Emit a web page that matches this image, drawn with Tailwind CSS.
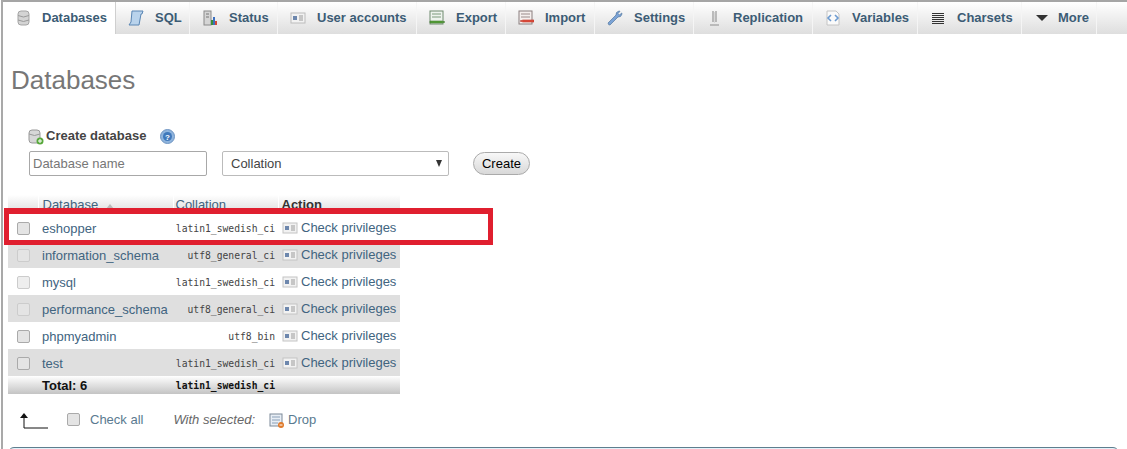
<!DOCTYPE html>
<html><head><meta charset="utf-8"><title>Databases</title>
<script src="https://cdn.jsdelivr.net/npm/@tailwindcss/browser@4"></script></head>
<body class="bg-white">
<div class="relative h-[449px] w-[1127px] overflow-hidden bg-white font-['Liberation_Sans',sans-serif] text-[13px]">
<div class="ml-px h-full border-l-2 border-[#a9a9a9]">
  <!-- tabs -->
  <nav class="flex h-[34px] border-t-2 border-[#a5a5a5] bg-gradient-to-b from-white to-[#dedede] text-[13px] font-bold text-[#3c5c75]">
    <a class="flex h-[32px] w-[113px] items-center gap-[11px] border-r border-[#cfcfcf] bg-white pl-3"><svg class="w-4 h-4" viewBox="0 0 16 16"><rect x="3" y="1" width="11" height="14" rx="3" fill="#d4d4d4" stroke="#a5a5a5"/><path d="M3 5.500q5.500 3 11 0M3 10q5.500 3 11 0" fill="none" stroke="#9a9a9a"/></svg><span>Databases</span></a>
    <a class="flex h-[32px] w-[74px] items-center gap-[11px] border-r border-[#f5f5f5] pl-3"><svg class="w-4 h-4" viewBox="0 0 16 16"><path d="M4 1h11l-1 3h-1l-2 11H1l2-3z" fill="#b9d3ec" stroke="#5a86b4"/></svg><span>SQL</span></a>
    <a class="flex h-[32px] w-[88px] items-center gap-[11px] border-r border-[#f5f5f5] pl-3"><svg class="w-4 h-4" viewBox="0 0 16 16"><rect x="2" y="1" width="7" height="14" fill="#d5d5d5" stroke="#8a8a8a"/><path d="M4 4h3M4 7h3" stroke="#777"/><rect x="9" y="10" width="2" height="5" fill="#3a8f3a"/><rect x="11" y="7" width="2" height="8" fill="#3a6fc0"/><rect x="13" y="11" width="2" height="4" fill="#d04a3a"/></svg><span>Status</span></a>
    <a class="flex h-[32px] w-[139px] items-center gap-[11px] border-r border-[#f5f5f5] pl-3"><svg class="w-4 h-4" viewBox="0 0 16 16"><rect x="1" y="3" width="14" height="10" fill="#f2f2f2" stroke="#bcbcbc"/><rect x="3" y="6" width="4" height="4" fill="#6d87ad"/><path d="M9 6h4M9 8h4M9 10h4" stroke="#9a9a9a"/></svg><span>User accounts</span></a>
    <a class="flex h-[32px] w-[89px] items-center gap-[11px] border-r border-[#f5f5f5] pl-3"><svg class="w-4 h-4" viewBox="0 0 16 16"><rect x="1" y="1" width="13" height="13" fill="#eef3ee" stroke="#6f8a6f"/><path d="M3 4h9M3 7h9" stroke="#7d9a7d"/><path d="M1 11h12l3 1-3 1H1z" fill="#57a33a" stroke="#3c7a28" stroke-width=".6"/></svg><span>Export</span></a>
    <a class="flex h-[32px] w-[89px] items-center gap-[11px] border-r border-[#f5f5f5] pl-3"><svg class="w-4 h-4" viewBox="0 0 16 16"><rect x="1" y="1" width="13" height="13" fill="#f5efee" stroke="#8a7f7f"/><path d="M3 4h9M3 7h9" stroke="#9a8a8a"/><path d="M16 10H5L2 11l3 1h11z" fill="#e2503f" stroke="#b83325" stroke-width=".6"/></svg><span>Import</span></a>
    <a class="flex h-[32px] w-[99px] items-center gap-[11px] border-r border-[#f5f5f5] pl-3"><svg class="w-4 h-4" viewBox="0 0 16 16"><path d="M1 13 9 5q-.5-3 3-4l1 .3-2 2.200 1.500 1.500 2.200-2 .3 1q-1 3.500-4 3L3 15q-1.500.5-2-2z" fill="#7ba3d6" stroke="#55789f" stroke-width=".7"/></svg><span>Settings</span></a>
    <a class="flex h-[32px] w-[119px] items-center gap-[11px] border-r border-[#f5f5f5] pl-3"><svg class="w-4 h-4" viewBox="0 0 16 16"><path d="M7 1v11M10 1v11M4 15h9" stroke="#8e8e8e" stroke-width="1.100" fill="none"/><path d="M8.500 2v11" stroke="#d8d8d8"/></svg><span>Replication</span></a>
    <a class="flex h-[32px] w-[105px] items-center gap-[11px] border-r border-[#f5f5f5] pl-3"><svg class="w-4 h-4" viewBox="0 0 16 16"><path d="M2 1h9l3 3v11H2z" fill="#fafafa" stroke="#c4c4c4"/><path d="M6 5 3 8l3 3M10 5l3 3-3 3" fill="none" stroke="#6d9bd0" stroke-width="1.600"/></svg><span>Variables</span></a>
    <a class="flex h-[32px] w-[104px] items-center gap-[11px] border-r border-[#f5f5f5] pl-3"><svg class="w-4 h-4" viewBox="0 0 16 16"><path d="M2 3.500h12M2 5.500h12M2 7.500h12M2 9.500h12M2 11.500h12M2 13.500h12" stroke="#333"/></svg><span>Charsets</span></a>
    <a class="flex h-[32px] w-[75px] items-center gap-2 border-r border-[#f5f5f5] pl-3"><svg class="w-4 h-4" viewBox="0 0 16 16"><path d="M2 5h12L8 11z" fill="#333"/></svg><span>More</span></a>
  </nav>

  <main class="pl-[5px]">
    <h2 class="mt-[31px] ml-[3px] text-[26px] leading-[30px] text-[#777]">Databases</h2>

    <section class="mt-[30px] ml-[20px]">
      <div class="flex h-[20px] items-center text-[13px] font-bold text-[#444]">
        <svg class="mr-[2px] mt-1 h-4 w-4" viewBox="0 0 16 16"><rect x="1" y="1" width="11" height="13" rx="3" fill="#d7d7d7" stroke="#999"/><path d="M1 5q5.500 3 11 0" fill="none" stroke="#999"/><circle cx="12" cy="12" r="3.500" fill="#58a83c"/><path d="M10 12h4M12 10v4" stroke="#fff"/></svg>
        <span class="pt-[2px]">Create database</span>
        <svg class="ml-[14px] mt-[3px] h-[15px] w-[15px]" viewBox="0 0 15 15"><circle cx="7.500" cy="7.500" r="7" fill="#8fb4dd" stroke="#6f95c2"/><circle cx="7.500" cy="7.500" r="4.500" fill="#3f78bb"/><text x="7.500" y="10.500" text-anchor="middle" font-size="8" font-weight="700" fill="#fff" font-family="Liberation Sans">?</text></svg>
      </div>
      <div class="mt-[6px] flex items-center">
        <input class="ml-px h-[25px] w-[178px] rounded-[2px] border border-[#a8a8a8] pl-[3px] text-[13px] outline-none placeholder:text-[#777]" placeholder="Database name">
        <div class="ml-[15px] flex h-[25px] w-[227px] items-center justify-between rounded-[2px] border border-[#bbb] pr-[6px] pl-2 text-[13px] text-[#444]"><span>Collation</span><span class="h-0 w-0 border-x-[3.500px] border-t-[7px] border-x-transparent border-t-[#333]"></span></div>
        <button class="ml-[24px] h-[23px] w-[57px] rounded-full border border-[#aaa] bg-gradient-to-b from-[#f8f8f8] to-[#d8d8d8] text-[13px] text-black">Create</button>
      </div>
    </section>

    <table class="mt-[19px] w-[392px] table-fixed border-collapse text-[13px] leading-[16px] text-[#41647f] [&_td]:pt-[2px]">
      <colgroup><col class="w-[30px]"><col class="w-[135px]"><col class="w-[105px]"><col></colgroup>
      <thead class="bg-gradient-to-b from-white to-[#dcdcdc]">
        <tr class="h-[19px] text-left align-top">
          <th class="border-r border-white"></th>
          <th class="border-r border-white pl-[4px] pt-[2px] font-normal"><span>Database</span><span class="ml-[8px] inline-block h-0 w-0 border-x-[4px] border-b-[5px] border-x-transparent border-b-[#bbb]"></span></th>
          <th class="border-r border-white pl-[2px] pt-[2px] font-normal">Collation</th>
          <th class="pl-[3px] pt-[2px] font-bold text-[#333]">Action</th>
        </tr>
      </thead>
      <tbody>
        <tr class="h-[27px] bg-white"><td class="pl-[9px]"><span class="block h-[13px] w-[13px] rounded-[2px] border border-[#aaa] bg-[#e4e4e4]"></span></td><td class="pl-1">eshopper</td><td class="pr-[3px] text-right font-['DejaVu_Sans_Mono',monospace] text-[9.7px] text-[#444]">latin1_swedish_ci</td><td class="pl-[4px]"><div class="flex items-center gap-[3px] pb-[2px]"><svg class="h-4 w-4" viewBox="0 0 16 16"><rect x="1" y="3" width="14" height="10" fill="#f2f2f2" stroke="#c4c4c4"/><rect x="3" y="6" width="4" height="4" fill="#6d87ad"/><path d="M9 6h4M9 8h4M9 10h4" stroke="#9a9a9a"/></svg><span>Check privileges</span></div></td></tr>
        <tr class="h-[27px] bg-[#dfdfdf]"><td class="pl-[9px]"><span class="block h-[13px] w-[13px] rounded-[2px] border border-[#ccc] bg-[#e4e4e4]"></span></td><td class="pl-1">information_schema</td><td class="pr-[3px] text-right font-['DejaVu_Sans_Mono',monospace] text-[9.7px] text-[#444]">utf8_general_ci</td><td class="pl-[4px]"><div class="flex items-center gap-[3px] pb-[2px]"><svg class="h-4 w-4" viewBox="0 0 16 16"><rect x="1" y="3" width="14" height="10" fill="#f2f2f2" stroke="#c4c4c4"/><rect x="3" y="6" width="4" height="4" fill="#6d87ad"/><path d="M9 6h4M9 8h4M9 10h4" stroke="#9a9a9a"/></svg><span>Check privileges</span></div></td></tr>
        <tr class="h-[27px] bg-white"><td class="pl-[9px]"><span class="block h-[13px] w-[13px] rounded-[2px] border border-[#ccc] bg-[#eee]"></span></td><td class="pl-1">mysql</td><td class="pr-[3px] text-right font-['DejaVu_Sans_Mono',monospace] text-[9.7px] text-[#444]">latin1_swedish_ci</td><td class="pl-[4px]"><div class="flex items-center gap-[3px] pb-[2px]"><svg class="h-4 w-4" viewBox="0 0 16 16"><rect x="1" y="3" width="14" height="10" fill="#f2f2f2" stroke="#c4c4c4"/><rect x="3" y="6" width="4" height="4" fill="#6d87ad"/><path d="M9 6h4M9 8h4M9 10h4" stroke="#9a9a9a"/></svg><span>Check privileges</span></div></td></tr>
        <tr class="h-[27px] bg-[#dfdfdf]"><td class="pl-[9px]"><span class="block h-[13px] w-[13px] rounded-[2px] border border-[#ccc] bg-[#e4e4e4]"></span></td><td class="pl-1">performance_schema</td><td class="pr-[3px] text-right font-['DejaVu_Sans_Mono',monospace] text-[9.7px] text-[#444]">utf8_general_ci</td><td class="pl-[4px]"><div class="flex items-center gap-[3px] pb-[2px]"><svg class="h-4 w-4" viewBox="0 0 16 16"><rect x="1" y="3" width="14" height="10" fill="#f2f2f2" stroke="#c4c4c4"/><rect x="3" y="6" width="4" height="4" fill="#6d87ad"/><path d="M9 6h4M9 8h4M9 10h4" stroke="#9a9a9a"/></svg><span>Check privileges</span></div></td></tr>
        <tr class="h-[27px] bg-white"><td class="pl-[9px]"><span class="block h-[13px] w-[13px] rounded-[2px] border border-[#aaa] bg-[#e4e4e4]"></span></td><td class="pl-1">phpmyadmin</td><td class="pr-[3px] text-right font-['DejaVu_Sans_Mono',monospace] text-[9.7px] text-[#444]">utf8_bin</td><td class="pl-[4px]"><div class="flex items-center gap-[3px] pb-[2px]"><svg class="h-4 w-4" viewBox="0 0 16 16"><rect x="1" y="3" width="14" height="10" fill="#f2f2f2" stroke="#c4c4c4"/><rect x="3" y="6" width="4" height="4" fill="#6d87ad"/><path d="M9 6h4M9 8h4M9 10h4" stroke="#9a9a9a"/></svg><span>Check privileges</span></div></td></tr>
        <tr class="h-[27px] bg-[#dfdfdf]"><td class="pl-[9px]"><span class="block h-[13px] w-[13px] rounded-[2px] border border-[#aaa] bg-[#e4e4e4]"></span></td><td class="pl-1">test</td><td class="pr-[3px] text-right font-['DejaVu_Sans_Mono',monospace] text-[9.7px] text-[#444]">latin1_swedish_ci</td><td class="pl-[4px]"><div class="flex items-center gap-[3px] pb-[2px]"><svg class="h-4 w-4" viewBox="0 0 16 16"><rect x="1" y="3" width="14" height="10" fill="#f2f2f2" stroke="#c4c4c4"/><rect x="3" y="6" width="4" height="4" fill="#6d87ad"/><path d="M9 6h4M9 8h4M9 10h4" stroke="#9a9a9a"/></svg><span>Check privileges</span></div></td></tr>
      </tbody>
      <tfoot class="bg-gradient-to-b from-white to-[#c4c4c4]">
        <tr class="h-[18px]"><td></td><td class="pl-1 font-bold text-[#111]">Total: 6</td><td class="pr-[3px] text-right font-['DejaVu_Sans_Mono',monospace] text-[9.7px] font-bold text-[#111]">latin1_swedish_ci</td><td></td></tr>
      </tfoot>
    </table>

    <div class="mt-[17px] flex h-[18px] items-center text-[#5a7a90]">
      <svg class="ml-[12px] h-[17px] w-[28px]" viewBox="0 0 28 17"><path d="M4 16h24M4 16V4" fill="none" stroke="#111" stroke-width="1"/><path d="M0 6 4 1l4 5z" fill="#111"/></svg>
      <span class="ml-[19px] mb-[2px] block h-[13px] w-[13px] rounded-[2px] border border-[#aaa] bg-[#e4e4e4]"></span>
      <span class="ml-[10px]">Check all</span>
      <span class="ml-[30px] italic text-[#666]">With selected:</span>
      <svg class="ml-[14px] h-4 w-4" viewBox="0 0 16 16"><rect x="1" y="2" width="12" height="12" fill="#e8eef5" stroke="#7d8a99"/><path d="M3 5h8M3 8h8M3 11h6" stroke="#8aa0b8"/><circle cx="12" cy="13" r="3" fill="#e07a2a"/><path d="M10.500 13h3" stroke="#fff"/></svg>
      <span class="ml-[3px]">Drop</span>
    </div>

    <div class="mt-[18px] h-[30px] w-[1111px] rounded-t-[6px] border border-[#5e7e8e] bg-[#e3f1fa]"></div>
  </main>
</div>
<!-- annotation -->
<div class="pointer-events-none absolute left-[4px] top-[208px] h-[37px] w-[489px] border-[5px] border-t-[6px] border-[#e01f2f]"></div>
</div>
</body></html>
